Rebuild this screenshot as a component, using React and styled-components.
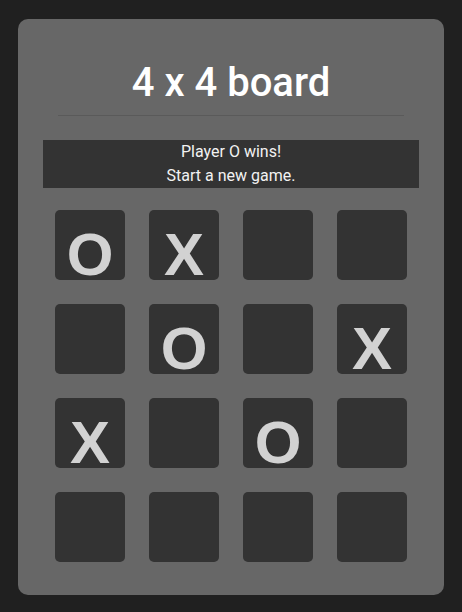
import styled, { createGlobalStyle } from "styled-components";

const GlobalStyle = createGlobalStyle`
  html, body {
    margin: 0;
    padding: 0;
    background: #202020;
  }
  body {
    font-family: Roboto, "Liberation Sans", sans-serif;
  }
`;

const Page = styled.div`
  padding: 19px 18px 17px;
`;

const Card = styled.div`
  background: #676767;
  border-radius: 10px;
  padding: 40px 25px 33px;
  display: flex;
  flex-direction: column;
  align-items: center;
`;

const Title = styled.h1`
  margin: 0;
  font-size: 40px;
  line-height: 48px;
  font-weight: 500;
  color: #fff;
`;

const Divider = styled.hr`
  align-self: stretch;
  margin: 8px 15px 24px;
  border: none;
  border-top: 1px solid #5a5a5a;
`;

const Status = styled.div`
  align-self: stretch;
  background: #333;
  color: #f2f2f2;
  font-size: 16px;
  line-height: 24px;
  text-align: center;
`;

const Board = styled.div`
  margin-top: 22px;
  display: grid;
  grid-template-columns: repeat(4, 70px);
  grid-auto-rows: 70px;
  gap: 24px;
`;

const Cell = styled.button`
  width: 70px;
  height: 70px;
  padding: 15px 0 0;
  border: none;
  border-radius: 5px;
  background: #333;
  color: #d2d2d2;
  font-family: "Liberation Sans", Arial, sans-serif;
  font-weight: 700;
  font-size: 60px;
  line-height: 60px;
  text-align: center;
  overflow: visible;
  box-sizing: border-box;
  display: block;
  cursor: pointer;
`;

const board = [
  ["O", "X", "", ""],
  ["", "O", "", "X"],
  ["X", "", "O", ""],
  ["", "", "", ""],
];

export default function App() {
  return (
    <>
      <GlobalStyle />
      <Page>
        <Card>
          <Title>4 x 4 board</Title>
          <Divider />
          <Status>
            Player O wins!
            <br />
            Start a new game.
          </Status>
          <Board>
            {board.flat().map((v, i) => (
              <Cell key={i}>{v}</Cell>
            ))}
          </Board>
        </Card>
      </Page>
    </>
  );
}
